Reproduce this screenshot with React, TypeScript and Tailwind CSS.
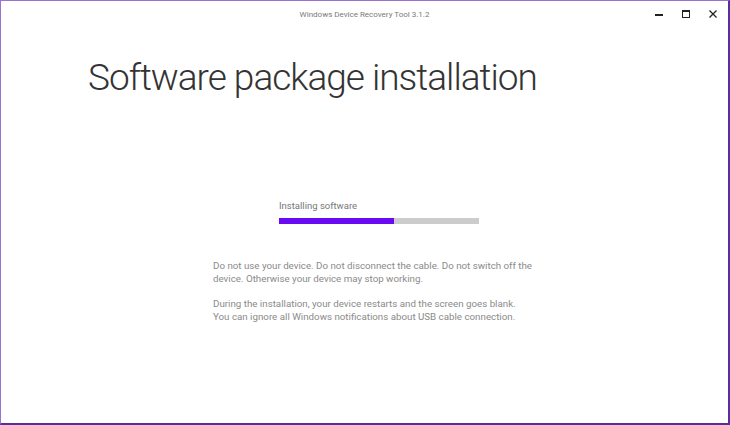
export default function App() {
  return (
    <div className="w-[730px] h-[425px] bg-white border-l border-t border-l-[#9b72d3] border-t-[#9b72d3] border-r-2 border-b-2 border-r-[#5a2d9e] border-b-[#5a2d9e] flex flex-col font-['Roboto',sans-serif] overflow-hidden">
      {/* title bar */}
      <div className="relative h-[28px] flex items-center justify-center">
        <span className="text-[8px] text-[#7a7a7a]">Windows Device Recovery Tool 3.1.2</span>
        <div className="absolute right-[10px] top-[8px] flex items-center gap-[17px]">
          <svg width="10" height="10" viewBox="0 0 10 10">
            <rect x="1" y="5" width="8" height="2" fill="#222" />
          </svg>
          <svg width="10" height="10" viewBox="0 0 10 10">
            <rect x="1.5" y="1.5" width="7" height="7" fill="none" stroke="#222" strokeWidth="1" />
            <rect x="1" y="1" width="8" height="2" fill="#222" />
          </svg>
          <svg width="10" height="10" viewBox="0 0 10 10">
            <path d="M1.5 1.5 L8.5 8.5 M8.5 1.5 L1.5 8.5" stroke="#222" strokeWidth="1.3" />
          </svg>
        </div>
      </div>

      <h1 className="pl-[87px] mt-[25px] text-[37px] leading-[48px] font-light tracking-[-1px] text-[#333] whitespace-nowrap">
        Software package installation
      </h1>

      <div className="mt-[97px] ml-[278px] w-[200px]">
        <div className="text-[9.5px] text-[#777] leading-[14px]">Installing software</div>
        <div className="mt-[5px] h-[6px] bg-[#cccccc] flex">
          <div className="w-[115px] bg-[#6a0af5]" />
        </div>
      </div>

      <div className="mt-[35px] ml-[212px] text-[9.75px] leading-[13px] text-[#8a8a8a] whitespace-nowrap">
        <p>
          Do not use your device. Do not disconnect the cable. Do not switch off the
          <br />
          device. Otherwise your device may stop working.
        </p>
        <p className="mt-[12px]">
          During the installation, your device restarts and the screen goes blank.
          <br />
          You can ignore all Windows notifications about USB cable connection.
        </p>
      </div>
    </div>
  );
}
